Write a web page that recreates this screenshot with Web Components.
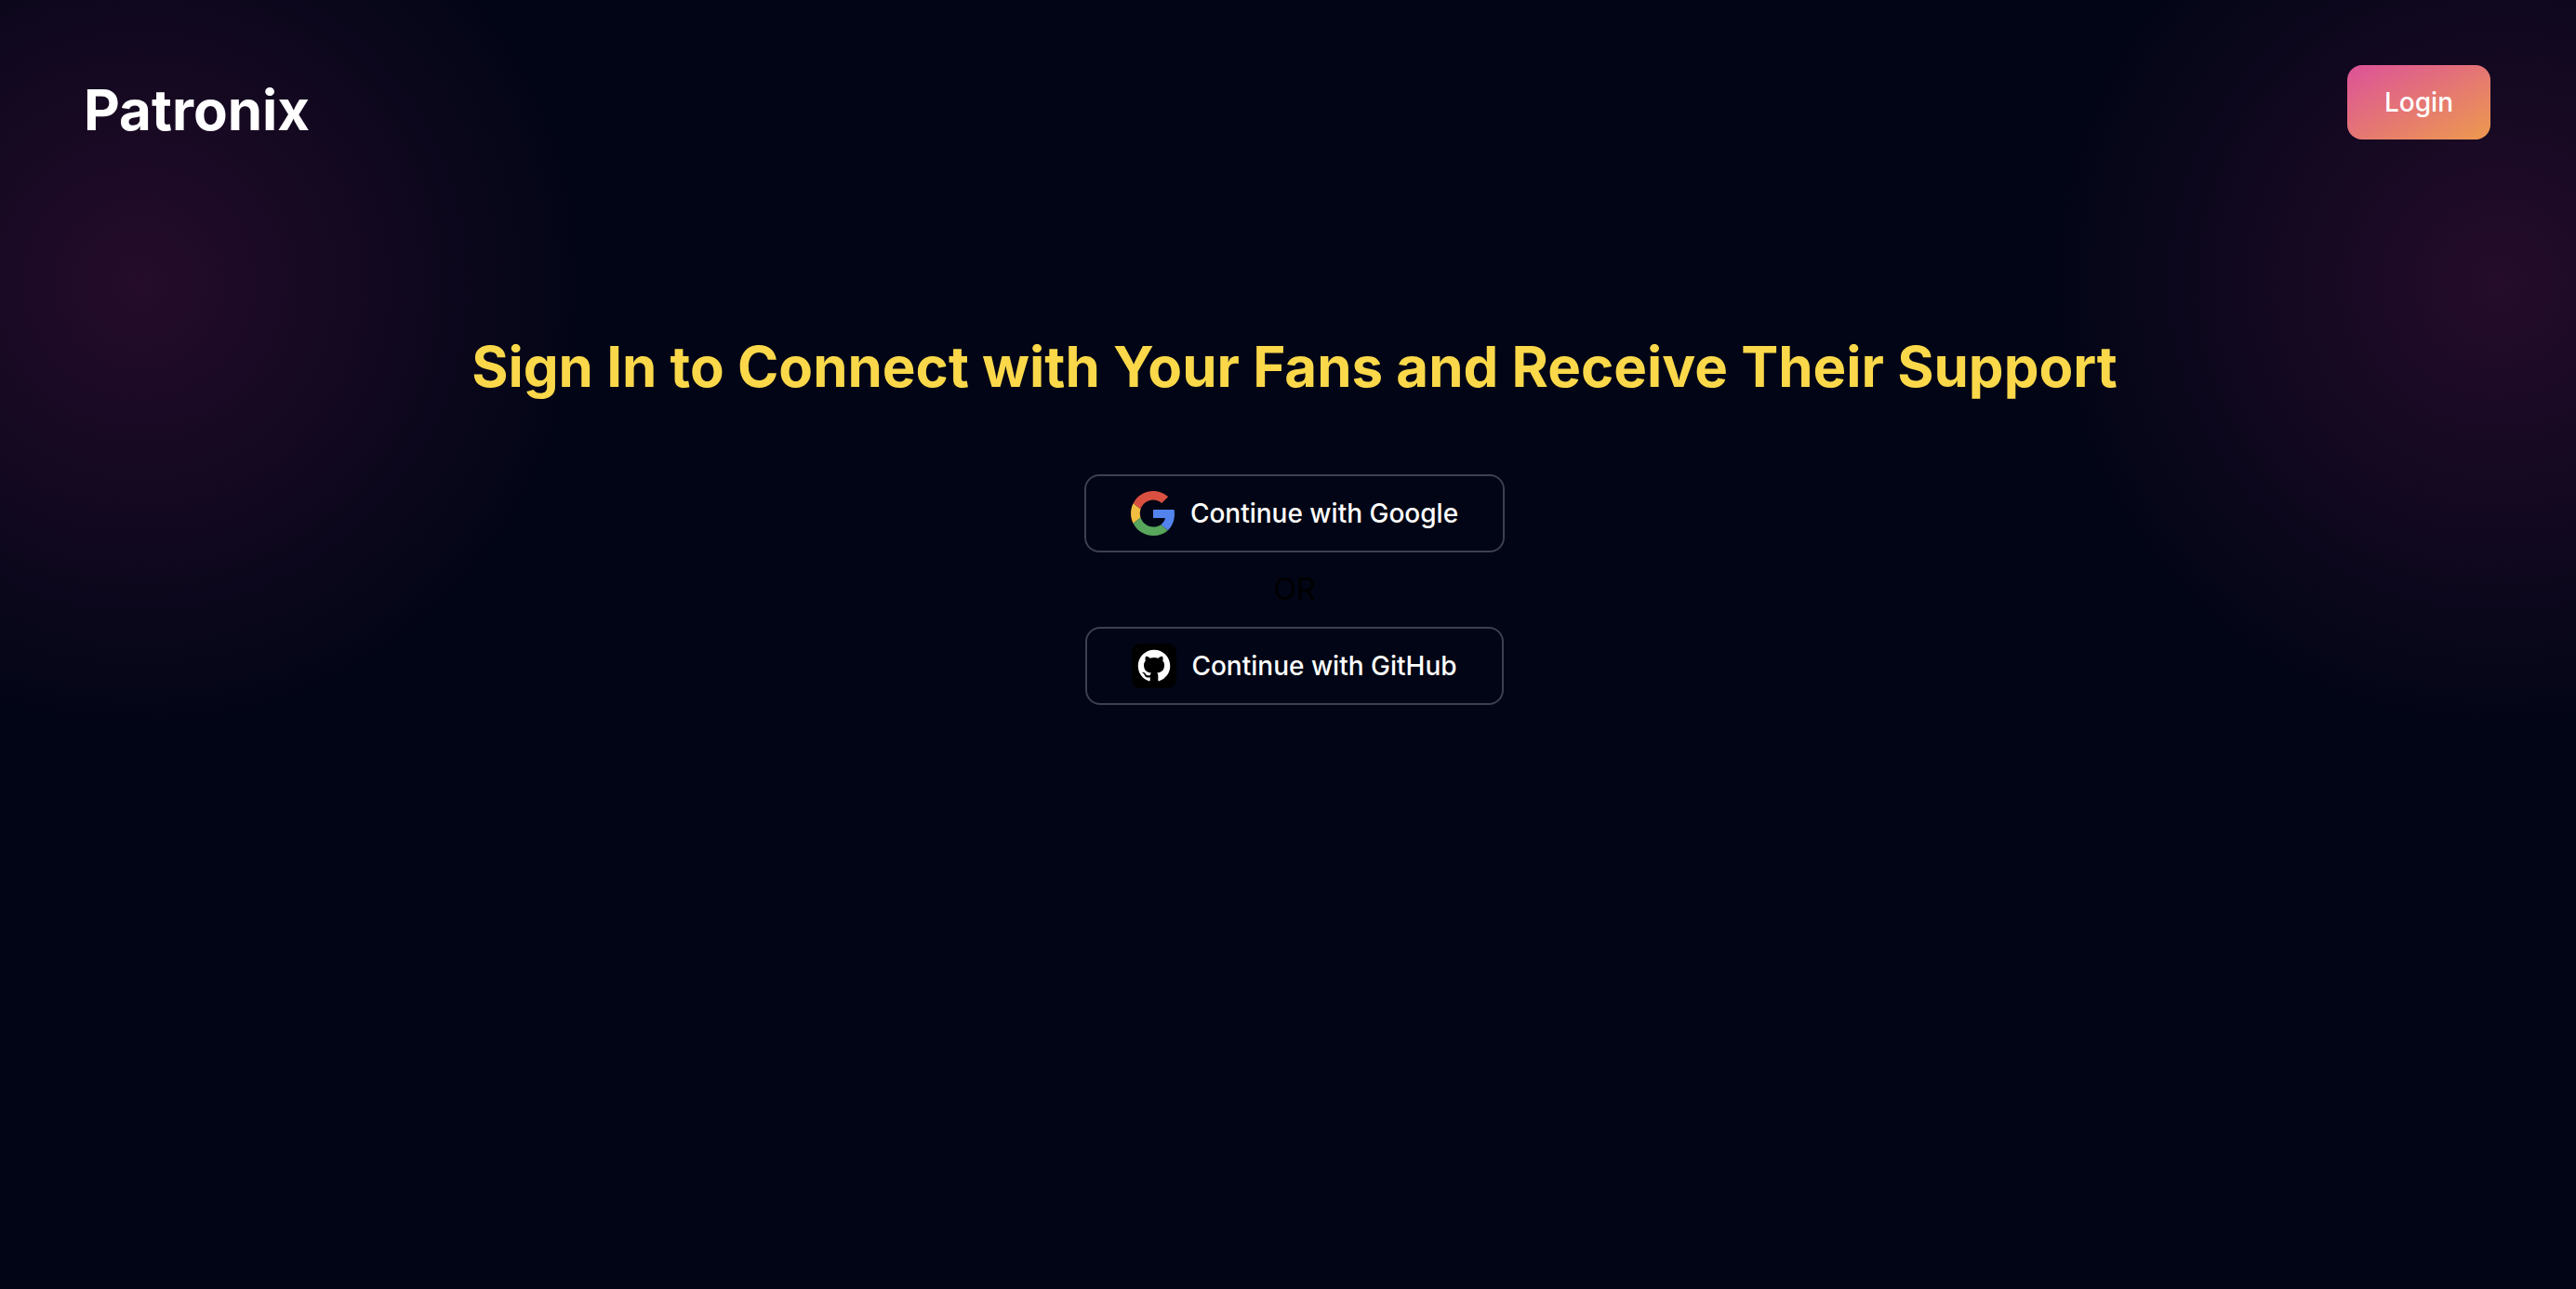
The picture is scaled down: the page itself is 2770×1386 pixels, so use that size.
<!DOCTYPE html>
<html lang="en">
<head>
<meta charset="utf-8">
<title>Patronix</title>
<style>
  html { background: #010515; }
  body { margin: 0; font-family: Inter, "Liberation Sans", sans-serif; }
</style>
</head>
<body>
<patronix-page>
  <patronix-header slot="header">Patronix</patronix-header>
  <sign-in-panel>
    <span slot="title">Sign In to Connect with Your Fans and Receive Their Support</span>
    <provider-button>
      <svg slot="icon" width="48" height="48" viewBox="0 0 48 48" aria-hidden="true">
        <path fill="#d95040" d="M24 9.5c3.54 0 6.71 1.22 9.21 3.6l6.85-6.85C35.9 2.38 30.47 0 24 0 14.62 0 6.51 5.38 2.56 13.22l7.98 6.19C12.43 13.72 17.74 9.5 24 9.5z"/>
        <path fill="#5383ec" d="M46.98 24.55c0-1.57-.15-3.09-.38-4.55H24v9.02h12.94c-.58 2.96-2.26 5.48-4.78 7.18l7.73 6c4.51-4.18 7.09-10.36 7.09-17.65z"/>
        <path fill="#f2be42" d="M10.53 28.59c-.48-1.45-.76-2.99-.76-4.59s.27-3.14.76-4.59l-7.98-6.19C.92 16.46 0 20.12 0 24c0 3.88.92 7.54 2.56 10.78l7.97-6.19z"/>
        <path fill="#58a55c" d="M24 48c6.48 0 11.93-2.13 15.89-5.81l-7.73-6c-2.15 1.45-4.92 2.3-8.16 2.3-6.26 0-11.57-4.22-13.47-9.91l-7.98 6.19C6.51 42.62 14.62 48 24 48z"/>
      </svg>
      Continue with Google
    </provider-button>
    <or-divider>OR</or-divider>
    <provider-button>
      <svg slot="icon" width="48" height="48" viewBox="0 0 48 48" aria-hidden="true">
        <rect width="48" height="48" rx="9" fill="#000"/>
        <g transform="translate(6 6) scale(1.5)"><path fill="#fff" d="M12 .5C5.65.5.5 5.65.5 12c0 5.08 3.29 9.39 7.86 10.91.58.11.79-.25.79-.56v-2.15c-3.2.7-3.88-1.36-3.88-1.36-.52-1.33-1.28-1.68-1.28-1.68-1.05-.72.08-.7.08-.7 1.16.08 1.77 1.19 1.77 1.19 1.03 1.77 2.7 1.26 3.36.96.1-.75.4-1.26.73-1.55-2.55-.29-5.24-1.28-5.24-5.68 0-1.26.45-2.28 1.19-3.09-.12-.29-.52-1.46.11-3.05 0 0 .97-.31 3.16 1.18a11 11 0 0 1 5.76 0c2.19-1.49 3.15-1.18 3.15-1.18.63 1.59.23 2.76.12 3.05.74.81 1.18 1.83 1.18 3.09 0 4.41-2.69 5.38-5.26 5.67.42.36.78 1.06.78 2.13v3.17c0 .31.21.68.8.56A11.5 11.5 0 0 0 23.5 12C23.5 5.65 18.35.5 12 .5z"/></g>
      </svg>
      Continue with GitHub
    </provider-button>
  </sign-in-panel>
</patronix-page>
<script>
const define = (name, html) => {
  const template = document.createElement("template");
  template.innerHTML = html;
  customElements.define(name, class extends HTMLElement {
    constructor() {
      super();
      this.attachShadow({ mode: "open" }).append(template.content.cloneNode(true));
    }
  });
};

define("patronix-page", `
  <style>
    :host {
      display: flex; flex-direction: column; gap: 200px;
      box-sizing: border-box; min-height: 100vh; padding-top: 70px;
      background:
        radial-gradient(circle 500px at 150px 304px, rgba(240,50,168,.15), rgba(240,50,168,0)),
        radial-gradient(circle 500px at calc(100% - 84px) 304px, rgba(240,50,168,.15), rgba(240,50,168,0));
    }
    main { padding-left: 14px; }
  </style>
  <slot name="header"></slot>
  <main><slot></slot></main>
`);

define("patronix-header", `
  <style>
    :host { display: block; }
    header { display: flex; justify-content: space-between; align-items: flex-start; padding: 0 92px 0 90px; }
    h1 { margin: 12px 0 0; font-size: 60px; line-height: 72px; font-weight: 700; color: #fff; }
    button {
      height: 80px; padding: 0 40px; border: 0; border-radius: 16px;
      background: linear-gradient(to bottom right, #dc5299, #ed9a4e);
      font: 500 28px/40px Inter, sans-serif; color: #fff;
    }
  </style>
  <header><h1><slot></slot></h1><button type="button">Login</button></header>
`);

define("sign-in-panel", `
  <style>
    :host { display: flex; flex-direction: column; align-items: center; gap: 16px; }
    h2 { margin: 0 0 60px; font-size: 60px; line-height: 80px; font-weight: 700; color: #fad84a; text-align: center; }
  </style>
  <h2><slot name="title"></slot></h2>
  <slot></slot>
`);

define("provider-button", `
  <style>
    :host { display: block; }
    button {
      display: flex; align-items: center; gap: 16px;
      height: 84px; padding: 0 48px; border: 2px solid #3a414f; border-radius: 16px;
      background: none; font: 500 28px/40px Inter, sans-serif; color: #fff;
    }
    ::slotted(svg) { display: block; }
  </style>
  <button type="button"><slot name="icon"></slot><span><slot></slot></span></button>
`);

define("or-divider", `
  <style>:host { display: block; font-size: 32px; line-height: 48px; color: #000; }</style>
  <slot></slot>
`);
</script>
</body>
</html>
